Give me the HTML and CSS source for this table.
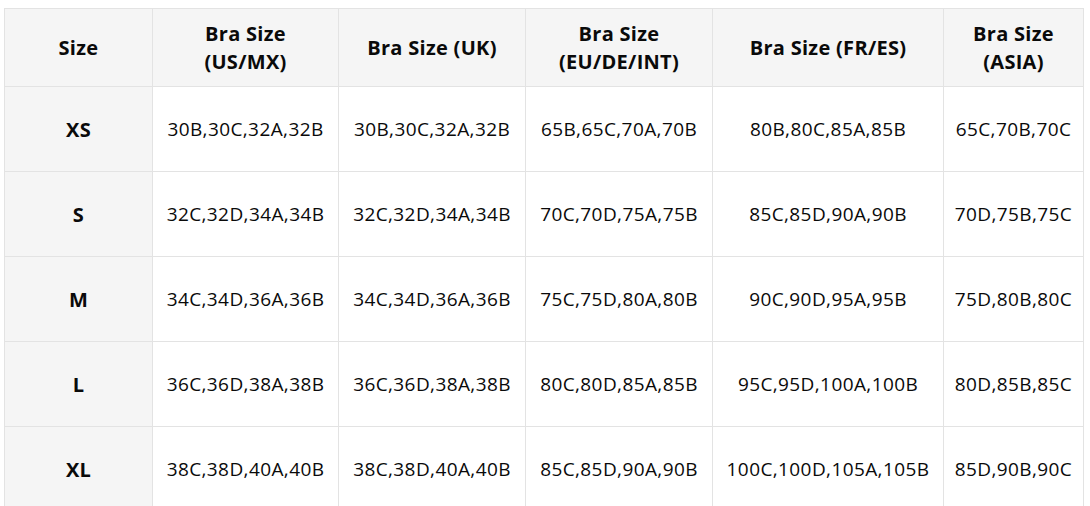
FILE: index.html
```html
<!DOCTYPE html>
<html>
<head>
<meta charset="utf-8">
<link rel="stylesheet" href="styles.css">
</head>
<body>
<div class="wrap">
<table class="size-table">
  <colgroup>
    <col class="c1"><col class="c2"><col class="c3"><col class="c4"><col class="c5"><col class="c6">
  </colgroup>
  <thead>
    <tr>
      <th>Size</th>
      <th>Bra Size<br>(US/MX)</th>
      <th>Bra Size (UK)</th>
      <th>Bra Size<br>(EU/DE/INT)</th>
      <th>Bra Size (FR/ES)</th>
      <th>Bra Size<br>(ASIA)</th>
    </tr>
  </thead>
  <tbody>
    <tr><th>XS</th><td>30B,30C,32A,32B</td><td>30B,30C,32A,32B</td><td>65B,65C,70A,70B</td><td>80B,80C,85A,85B</td><td>65C,70B,70C</td></tr>
    <tr><th>S</th><td>32C,32D,34A,34B</td><td>32C,32D,34A,34B</td><td>70C,70D,75A,75B</td><td>85C,85D,90A,90B</td><td>70D,75B,75C</td></tr>
    <tr><th>M</th><td>34C,34D,36A,36B</td><td>34C,34D,36A,36B</td><td>75C,75D,80A,80B</td><td>90C,90D,95A,95B</td><td>75D,80B,80C</td></tr>
    <tr><th>L</th><td>36C,36D,38A,38B</td><td>36C,36D,38A,38B</td><td>80C,80D,85A,85B</td><td>95C,95D,100A,100B</td><td>80D,85B,85C</td></tr>
    <tr><th>XL</th><td>38C,38D,40A,40B</td><td>38C,38D,40A,40B</td><td>85C,85D,90A,90B</td><td>100C,100D,105A,105B</td><td>85D,90B,90C</td></tr>
  </tbody>
</table>
</div>
</body>
</html>
```

FILE: styles.css
```css
html, body {
  margin: 0;
  padding: 0;
  background: #ffffff;
}
.wrap {
  padding: 8px 0 0 4px;
}
.size-table {
  border-collapse: collapse;
  table-layout: fixed;
  width: 1079px;
  font-family: "Open Sans", "Noto Sans", sans-serif;
  font-size: 19px;
  color: #0a0a0a;
  letter-spacing: 0.4px;
}
.c1 { width: 148px; }
.c2 { width: 186px; }
.c3 { width: 187px; }
.c4 { width: 187px; }
.c5 { width: 231px; }
.c6 { width: 140px; }
.size-table th,
.size-table td {
  border: 1px solid #e3e3e3;
  text-align: center;
  vertical-align: middle;
  padding: 0;
  white-space: nowrap;
}
.size-table thead th {
  height: 77px;
  background: #f5f5f5;
  font-weight: 700;
  font-size: 20px;
  letter-spacing: 0.3px;
  line-height: 28px;
}
.size-table tbody th {
  background: #f5f5f5;
  font-weight: 700;
  font-size: 20px;
  letter-spacing: 0.3px;
}
.size-table tbody td,
.size-table tbody th {
  height: 84px;
}
.size-table tbody td {
  font-weight: 400;
}
```
